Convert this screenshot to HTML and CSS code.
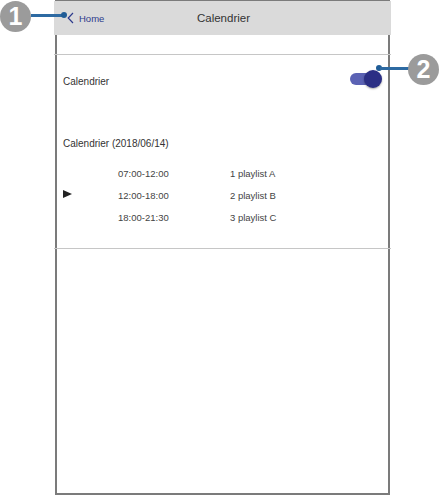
FILE: index.html
```html
<!DOCTYPE html>
<html>
<head>
<meta charset="utf-8">
<link rel="stylesheet" href="styles.css">
</head>
<body>
<div class="page">
  <div class="frame">
    <div class="header">
      <div class="back">
        <svg class="chev" width="7" height="12" viewBox="0 0 7 12"><path d="M6 1 L1.2 6 L6 11" fill="none" stroke="#2d3a8c" stroke-width="1.2"/></svg>
        <span>Home</span>
      </div>
      <div class="title">Calendrier</div>
    </div>
    <div class="spacer"></div>
    <div class="divider"></div>
    <div class="setting">
      <span class="label">Calendrier</span>
      <div class="toggle"><div class="track"></div><div class="knob"></div></div>
    </div>
    <div class="date">Calendrier (2018/06/14)</div>
    <div class="rows">
      <div class="row"><span class="mark"></span><span class="time">07:00-12:00</span><span class="pl">1 playlist A</span></div>
      <div class="row"><span class="mark"><span class="tri"></span></span><span class="time">12:00-18:00</span><span class="pl">2 playlist B</span></div>
      <div class="row"><span class="mark"></span><span class="time">18:00-21:30</span><span class="pl">3 playlist C</span></div>
    </div>
    <div class="divider bottom"></div>
  </div>

  <div class="callout c1">
    <span class="num">1</span>
    <span class="line"></span>
    <span class="dot"></span>
  </div>
  <div class="callout c2">
    <span class="dot"></span>
    <span class="line"></span>
    <span class="num">2</span>
  </div>
</div>
</body>
</html>
```

FILE: styles.css
```css
* { box-sizing: border-box; }
html, body { margin: 0; padding: 0; background: #fff; }
body {
  font-family: "Liberation Sans", Arial, sans-serif;
  color: #333;
}
.page {
  position: relative;
  width: 441px;
  height: 495px;
  overflow: hidden;
}
.frame {
  margin-left: 55px;
  width: 335px;
  height: 495px;
  border: 2px solid #7b7b7b;
  border-top-width: 1px;
  display: flex;
  flex-direction: column;
}
.header {
  position: relative;
  height: 34px;
  margin: 0 -3px 0 -3px;
  background: #dadada;
  display: flex;
  align-items: center;
  justify-content: center;
}
.back {
  position: absolute;
  left: 13px;
  top: 0;
  height: 34px;
  display: flex;
  align-items: center;
  gap: 5px;
  color: #2d3a8c;
  font-size: 9.5px;
}
.chev { display: block; margin-top: -1px; }
.title {
  font-size: 11.5px;
  color: #333;
  margin-left: 2px;
}
.spacer { height: 19px; }
.divider {
  height: 1px;
  background: #c6c6c6;
  margin: 0 -3px;
}
.setting {
  height: 52px;
  display: flex;
  align-items: center;
  justify-content: space-between;
  padding: 0 6px 0 6px;
}
.label { font-size: 10px; color: #333; }
.toggle {
  position: relative;
  width: 32px;
  height: 18px;
  margin-top: -4px;
}
.track {
  position: absolute;
  left: 0;
  top: 3px;
  width: 26px;
  height: 12px;
  border-radius: 6px;
  background: #5b62b4;
}
.knob {
  position: absolute;
  right: 0;
  top: 0;
  width: 18px;
  height: 18px;
  border-radius: 50%;
  background: #2b2f85;
  box-shadow: 0 1px 2px rgba(0,0,0,0.35);
}
.date {
  font-size: 10px;
  line-height: 14px;
  margin-top: 30px;
  padding-left: 6px;
  color: #333;
}
.rows {
  margin-top: 11px;
  padding-left: 6px;
}
.row {
  height: 22px;
  display: grid;
  grid-template-columns: 55px 112px 1fr;
  align-items: center;
  font-size: 9.5px;
  color: #444;
}
.mark { display: flex; align-items: center; }
.tri {
  width: 0;
  height: 0;
  border-top: 4.5px solid transparent;
  border-bottom: 4.5px solid transparent;
  border-left: 9px solid #222;
  margin-top: -3px;
}
.divider.bottom { margin-top: 20px; }

.callout { position: absolute; display: flex; align-items: center; }
.callout .num {
  width: 31px;
  height: 31px;
  border-radius: 50%;
  background: #9b9b9b;
  color: #fff;
  font-weight: bold;
  font-size: 25px;
  display: flex;
  align-items: center;
  justify-content: center;
  line-height: 1;
}
.callout .line {
  height: 3px;
  background: #2d6aa2;
}
.callout .dot {
  width: 6px;
  height: 6px;
  border-radius: 50%;
  background: #1f5c96;
}
.c1 { left: 0; top: 0; height: 32px; }
.c1 .line { width: 33px; margin-top: -2px; }
.c1 .dot { margin-left: -3px; margin-top: -2px; }
.c2 { left: 376px; top: 54px; height: 31px; }
.c2 .dot { margin-top: -3px; }
.c2 .line { width: 30px; margin-left: -2px; margin-top: -3px; }
.c2 .num { margin-left: -2px; }
```
